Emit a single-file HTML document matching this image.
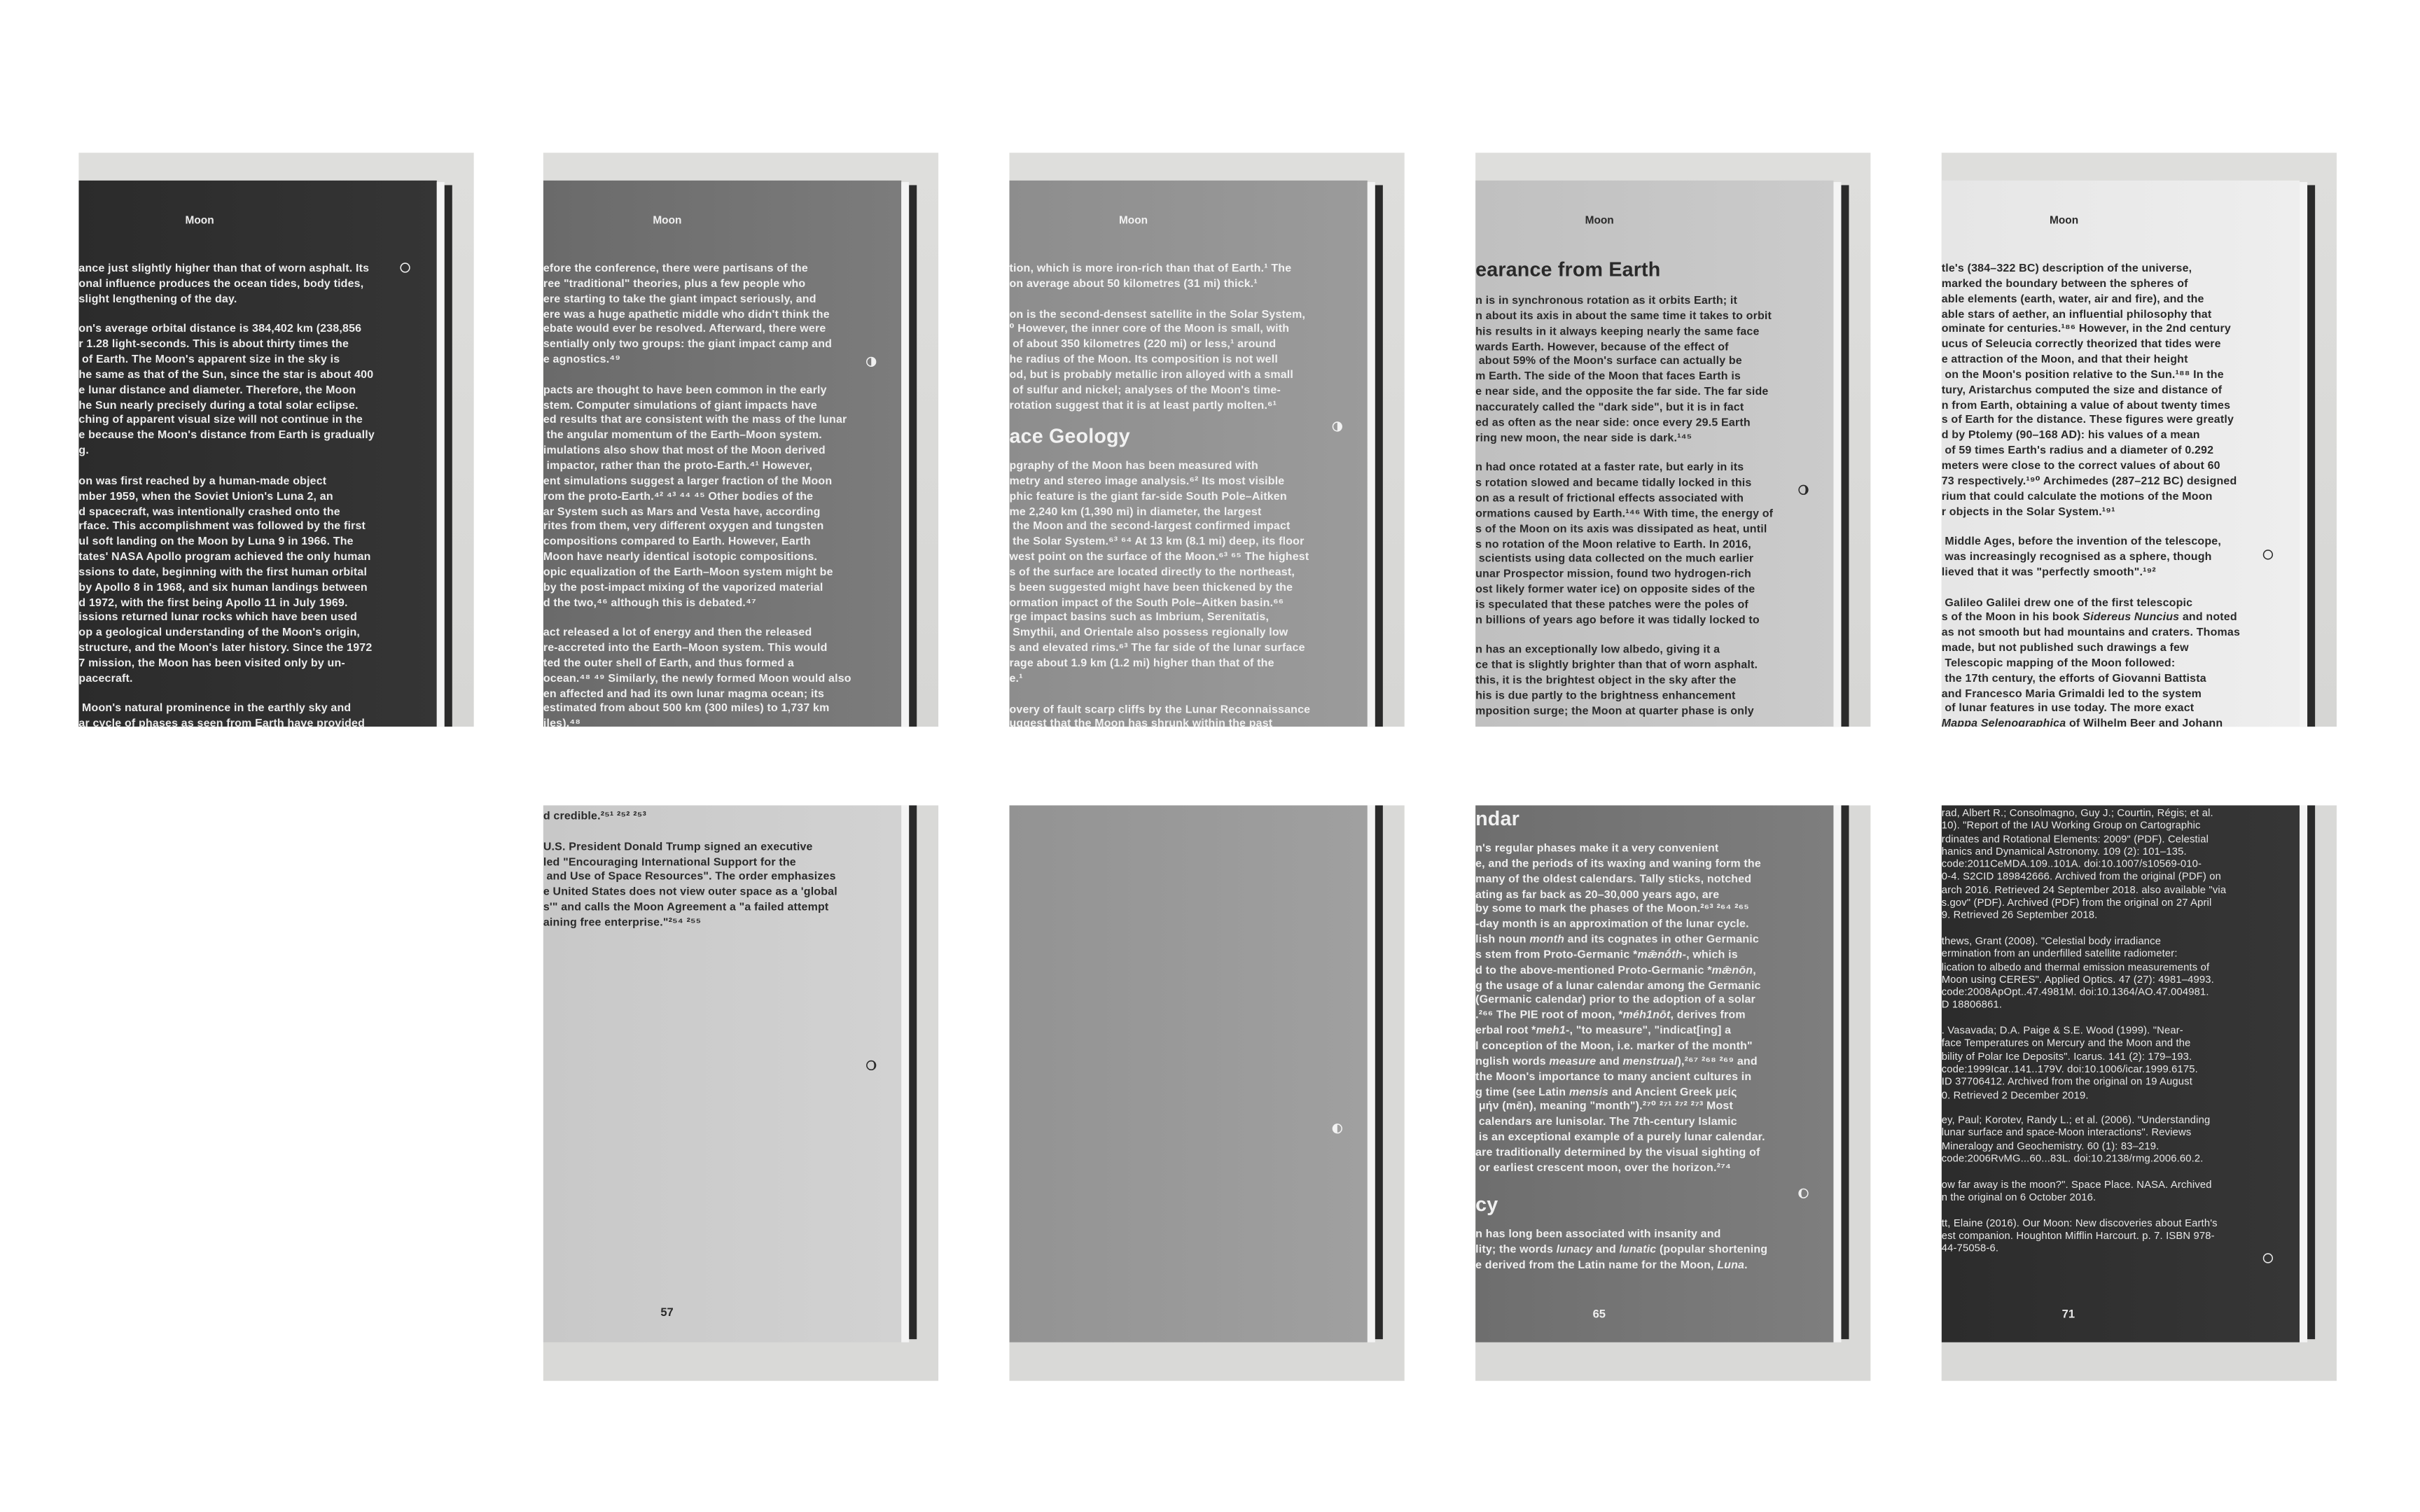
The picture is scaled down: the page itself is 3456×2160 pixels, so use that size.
<!DOCTYPE html>
<html><head><meta charset="utf-8"><style>
html,body{margin:0;padding:0;background:#fff;width:3456px;height:2160px;overflow:hidden}
#s{position:absolute;left:0;top:0;width:1568px;height:980px;transform:scale(2.20408);transform-origin:0 0}
.p{position:absolute;width:256px;overflow:hidden;background:#d9d9d7}
.t{top:99px;height:372px;background:linear-gradient(#dededc,#d6d6d4)}.b{top:522px;height:373px}
.pg{position:absolute;left:0;width:232px;overflow:hidden}
.t .pg{top:18px;bottom:0}
.t .pg > *{margin-top:3px}
.b .pg > *{margin-top:1px}
.b .pg{top:0;height:348px}
.edge{position:absolute;width:5px;background:#f4f4f4}
.bind{position:absolute;width:5px;background:#2a2a2a}
.t .edge{left:232px;top:19px;bottom:0}.t .bind{left:237px;top:21px;bottom:0}
.b .edge{left:232px;top:0;height:348px}.b .bind{left:237px;top:0;height:346px}
.tx{position:absolute;left:0;white-space:pre;font-family:"Liberation Sans","DejaVu Sans",sans-serif;font-size:7.25px;line-height:9.85px;font-weight:bold;letter-spacing:0.08px}
.h{position:absolute;font-family:"Liberation Sans",sans-serif;font-size:7px;font-weight:bold}
.hd{font-size:13px;line-height:16px;font-weight:bold}
.c{position:absolute;width:7px;height:7px}
.n{position:absolute;font-family:"Liberation Sans",sans-serif;font-size:7.5px;font-weight:bold}
</style></head><body><div id="s">

<!-- top 1 -->
<div class="p t" style="left:51px">
<div class="pg" style="background:linear-gradient(90deg,#2b2b2b,#353535);color:#ececec">
<div class="h" style="left:69px;top:20px">Moon</div>
<div class="tx" style="top:49px">ance just slightly higher than that of worn asphalt. Its
onal influence produces the ocean tides, body tides,
slight lengthening of the day.

on's average orbital distance is 384,402 km (238,856
r 1.28 light-seconds. This is about thirty times the
 of Earth. The Moon's apparent size in the sky is
he same as that of the Sun, since the star is about 400
e lunar distance and diameter. Therefore, the Moon
he Sun nearly precisely during a total solar eclipse.
ching of apparent visual size will not continue in the
e because the Moon's distance from Earth is gradually
g.

on was first reached by a human-made object
mber 1959, when the Soviet Union's Luna 2, an
d spacecraft, was intentionally crashed onto the
rface. This accomplishment was followed by the first
ul soft landing on the Moon by Luna 9 in 1966. The
tates' NASA Apollo program achieved the only human
ssions to date, beginning with the first human orbital
by Apollo 8 in 1968, and six human landings between
d 1972, with the first being Apollo 11 in July 1969.
issions returned lunar rocks which have been used
op a geological understanding of the Moon's origin,
structure, and the Moon's later history. Since the 1972
7 mission, the Moon has been visited only by un-
pacecraft.

 Moon's natural prominence in the earthly sky and
ar cycle of phases as seen from Earth have provided</div>
<svg class="c" style="left:207.5px;top:49.5px" viewBox="0 0 8 8"><circle cx="4" cy="4" r="3.3" fill="none" stroke="#eee" stroke-width="0.8"/></svg>
</div><div class="edge"></div><div class="bind"></div></div>

<!-- top 2 -->
<div class="p t" style="left:352px">
<div class="pg" style="background:linear-gradient(90deg,#6a6a6a,#7c7c7c);color:#f0f0f0">
<div class="h" style="left:71px;top:20px">Moon</div>
<div class="tx" style="top:49px">efore the conference, there were partisans of the
ree "traditional" theories, plus a few people who
ere starting to take the giant impact seriously, and
ere was a huge apathetic middle who didn't think the
ebate would ever be resolved. Afterward, there were
sentially only two groups: the giant impact camp and
e agnostics.⁴⁹

pacts are thought to have been common in the early
stem. Computer simulations of giant impacts have
ed results that are consistent with the mass of the lunar
 the angular momentum of the Earth–Moon system.
imulations also show that most of the Moon derived
 impactor, rather than the proto-Earth.⁴¹ However,
ent simulations suggest a larger fraction of the Moon
rom the proto-Earth.⁴² ⁴³ ⁴⁴ ⁴⁵ Other bodies of the
ar System such as Mars and Vesta have, according
rites from them, very different oxygen and tungsten
compositions compared to Earth. However, Earth
Moon have nearly identical isotopic compositions.
opic equalization of the Earth–Moon system might be
by the post-impact mixing of the vaporized material
d the two,⁴⁶ although this is debated.⁴⁷

act released a lot of energy and then the released
re-accreted into the Earth–Moon system. This would
ted the outer shell of Earth, and thus formed a
ocean.⁴⁸ ⁴⁹ Similarly, the newly formed Moon would also
en affected and had its own lunar magma ocean; its
estimated from about 500 km (300 miles) to 1,737 km
iles).⁴⁸</div>
<svg class="c" style="left:208.5px;top:110.5px" viewBox="0 0 8 8"><circle cx="4" cy="4" r="3.3" fill="none" stroke="#f0f0f0" stroke-width="0.8"/><path d="M4 .7A3.3 3.3 0 0 1 4 7.3Z" fill="#f0f0f0"/></svg>
</div><div class="edge"></div><div class="bind"></div></div>

<!-- top 3 -->
<div class="p t" style="left:654px">
<div class="pg" style="background:linear-gradient(90deg,#8d8d8d,#9b9b9b);color:#f2f2f2">
<div class="h" style="left:71px;top:20px">Moon</div>
<div class="tx" style="top:49px">tion, which is more iron-rich than that of Earth.¹ The
on average about 50 kilometres (31 mi) thick.¹

on is the second-densest satellite in the Solar System,
⁰ However, the inner core of the Moon is small, with
 of about 350 kilometres (220 mi) or less,¹ around
he radius of the Moon. Its composition is not well
od, but is probably metallic iron alloyed with a small
 of sulfur and nickel; analyses of the Moon's time-
rotation suggest that it is at least partly molten.⁶¹</div>
<div class="tx hd" style="top:155px">ace Geology</div>
<div class="tx" style="top:177px">pgraphy of the Moon has been measured with
metry and stereo image analysis.⁶² Its most visible
phic feature is the giant far-side South Pole–Aitken
me 2,240 km (1,390 mi) in diameter, the largest
 the Moon and the second-largest confirmed impact
 the Solar System.⁶³ ⁶⁴ At 13 km (8.1 mi) deep, its floor
west point on the surface of the Moon.⁶³ ⁶⁵ The highest
s of the surface are located directly to the northeast,
s been suggested might have been thickened by the
ormation impact of the South Pole–Aitken basin.⁶⁶
rge impact basins such as Imbrium, Serenitatis,
 Smythii, and Orientale also possess regionally low
s and elevated rims.⁶³ The far side of the lunar surface
rage about 1.9 km (1.2 mi) higher than that of the
e.¹

overy of fault scarp cliffs by the Lunar Reconnaissance
uggest that the Moon has shrunk within the past</div>
<svg class="c" style="left:208.5px;top:152.5px" viewBox="0 0 8 8"><circle cx="4" cy="4" r="3.3" fill="none" stroke="#f2f2f2" stroke-width="0.8"/><path d="M4 .7A3.3 3.3 0 0 1 4 7.3Z" fill="#f2f2f2"/></svg>
</div><div class="edge"></div><div class="bind"></div></div>

<!-- top 4 -->
<div class="p t" style="left:956px">
<div class="pg" style="background:linear-gradient(90deg,#c0c0c0,#cbcbcb);color:#2a2a2a">
<div class="h" style="left:71px;top:20px">Moon</div>
<div class="tx hd" style="top:47px">earance from Earth</div>
<div class="tx" style="top:70px">n is in synchronous rotation as it orbits Earth; it
n about its axis in about the same time it takes to orbit
his results in it always keeping nearly the same face
wards Earth. However, because of the effect of
 about 59% of the Moon's surface can actually be
m Earth. The side of the Moon that faces Earth is
e near side, and the opposite the far side. The far side
naccurately called the "dark side", but it is in fact
ed as often as the near side: once every 29.5 Earth
ring new moon, the near side is dark.¹⁴⁵

n had once rotated at a faster rate, but early in its
s rotation slowed and became tidally locked in this
on as a result of frictional effects associated with
ormations caused by Earth.¹⁴⁶ With time, the energy of
s of the Moon on its axis was dissipated as heat, until
s no rotation of the Moon relative to Earth. In 2016,
 scientists using data collected on the much earlier
unar Prospector mission, found two hydrogen-rich
ost likely former water ice) on opposite sides of the
is speculated that these patches were the poles of
n billions of years ago before it was tidally locked to

n has an exceptionally low albedo, giving it a
ce that is slightly brighter than that of worn asphalt.
this, it is the brightest object in the sky after the
his is due partly to the brightness enhancement
mposition surge; the Moon at quarter phase is only</div>
<svg class="c" style="left:208.5px;top:193.5px" viewBox="0 0 8 8"><circle cx="4" cy="4" r="3.3" fill="none" stroke="#2a2a2a" stroke-width="0.8"/><path d="M4 .7A3.3 3.3 0 0 1 4 7.3A1.6 3.3 0 0 0 4 .7Z" fill="#2a2a2a"/></svg>
</div><div class="edge"></div><div class="bind"></div></div>

<!-- top 5 -->
<div class="p t" style="left:1258px">
<div class="pg" style="background:linear-gradient(90deg,#e6e6e6,#eeeeee);color:#2a2a2a">
<div class="h" style="left:70px;top:20px">Moon</div>
<div class="tx" style="top:49px">tle's (384–322 BC) description of the universe,
marked the boundary between the spheres of
able elements (earth, water, air and fire), and the
able stars of aether, an influential philosophy that
ominate for centuries.¹⁸⁶ However, in the 2nd century
ucus of Seleucia correctly theorized that tides were
e attraction of the Moon, and that their height
 on the Moon's position relative to the Sun.¹⁸⁸ In the
tury, Aristarchus computed the size and distance of
n from Earth, obtaining a value of about twenty times
s of Earth for the distance. These figures were greatly
d by Ptolemy (90–168 AD): his values of a mean
 of 59 times Earth's radius and a diameter of 0.292
meters were close to the correct values of about 60
73 respectively.¹⁹⁰ Archimedes (287–212 BC) designed
rium that could calculate the motions of the Moon
r objects in the Solar System.¹⁹¹

 Middle Ages, before the invention of the telescope,
 was increasingly recognised as a sphere, though
lieved that it was "perfectly smooth".¹⁹²

 Galileo Galilei drew one of the first telescopic
s of the Moon in his book <i>Sidereus Nuncius</i> and noted
as not smooth but had mountains and craters. Thomas
made, but not published such drawings a few
 Telescopic mapping of the Moon followed:
 the 17th century, the efforts of Giovanni Battista
and Francesco Maria Grimaldi led to the system
 of lunar features in use today. The more exact
<i>Mappa Selenographica</i> of Wilhelm Beer and Johann</div>
<svg class="c" style="left:207.5px;top:235.5px" viewBox="0 0 8 8"><circle cx="4" cy="4" r="3.3" fill="none" stroke="#2a2a2a" stroke-width="0.8"/></svg>
</div><div class="edge"></div><div class="bind"></div></div>

<!-- bottom 2 -->
<div class="p b" style="left:352px">
<div class="pg" style="background:linear-gradient(90deg,#c8c8c8,#d2d2d2);color:#2a2a2a">
<div class="tx" style="top:1px">d credible.²⁵¹ ²⁵² ²⁵³

U.S. President Donald Trump signed an executive
led "Encouraging International Support for the
 and Use of Space Resources". The order emphasizes
e United States does not view outer space as a 'global
s'" and calls the Moon Agreement a "a failed attempt
aining free enterprise."²⁵⁴ ²⁵⁵</div>
<svg class="c" style="left:208.5px;top:163.5px" viewBox="0 0 8 8"><circle cx="4" cy="4" r="3.3" fill="none" stroke="#2a2a2a" stroke-width="0.8"/><path d="M4 .7A3.3 3.3 0 0 1 4 7.3A2.2 3.3 0 0 0 4 .7Z" fill="#2a2a2a"/></svg>
<div class="n" style="left:76px;top:323px">57</div>
</div><div class="edge"></div><div class="bind"></div></div>

<!-- bottom 3 -->
<div class="p b" style="left:654px">
<div class="pg" style="background:linear-gradient(90deg,#939393,#a0a0a0)">
<svg class="c" style="left:208.5px;top:204.5px" viewBox="0 0 8 8"><circle cx="4" cy="4" r="3.3" fill="none" stroke="#f2f2f2" stroke-width="0.8"/><path d="M4 .7A3.3 3.3 0 0 0 4 7.3Z" fill="#f2f2f2"/></svg>
</div><div class="edge"></div><div class="bind"></div></div>

<!-- bottom 4 -->
<div class="p b" style="left:956px">
<div class="pg" style="background:linear-gradient(90deg,#6e6e6e,#7e7e7e);color:#f0f0f0">
<div class="tx hd" style="top:0px">ndar</div>
<div class="tx" style="top:22px">n's regular phases make it a very convenient
e, and the periods of its waxing and waning form the
many of the oldest calendars. Tally sticks, notched
ating as far back as 20–30,000 years ago, are
by some to mark the phases of the Moon.²⁶³ ²⁶⁴ ²⁶⁵
-day month is an approximation of the lunar cycle.
lish noun <i>month</i> and its cognates in other Germanic
s stem from Proto-Germanic *<i>mǣnṓth-</i>, which is
d to the above-mentioned Proto-Germanic *<i>mǣnōn</i>,
g the usage of a lunar calendar among the Germanic
(Germanic calendar) prior to the adoption of a solar
.²⁶⁶ The PIE root of moon, *<i>méh1nōt</i>, derives from
erbal root *<i>meh1-</i>, "to measure", "indicat[ing] a
l conception of the Moon, i.e. marker of the month"
nglish words <i>measure</i> and <i>menstrual</i>),²⁶⁷ ²⁶⁸ ²⁶⁹ and
the Moon's importance to many ancient cultures in
g time (see Latin <i>mensis</i> and Ancient Greek μείς
 μήν (mēn), meaning "month").²⁷⁰ ²⁷¹ ²⁷² ²⁷³ Most
 calendars are lunisolar. The 7th-century Islamic
 is an exceptional example of a purely lunar calendar.
are traditionally determined by the visual sighting of
 or earliest crescent moon, over the horizon.²⁷⁴</div>
<div class="tx hd" style="top:250px">cy</div>
<div class="tx" style="top:272px">n has long been associated with insanity and
lity; the words <i>lunacy</i> and <i>lunatic</i> (popular shortening
e derived from the Latin name for the Moon, <i>Luna</i>.</div>
<svg class="c" style="left:208.5px;top:246.5px" viewBox="0 0 8 8"><circle cx="4" cy="4" r="3.3" fill="none" stroke="#f0f0f0" stroke-width="0.8"/><path d="M4 .7A3.3 3.3 0 0 0 4 7.3A1.6 3.3 0 0 1 4 .7Z" fill="#f0f0f0"/></svg>
<div class="n" style="left:76px;top:324px">65</div>
</div><div class="edge"></div><div class="bind"></div></div>

<!-- bottom 5 -->
<div class="p b" style="left:1258px">
<div class="pg" style="background:linear-gradient(90deg,#2c2c2c,#363636);color:#e8e8e8">
<div class="tx" style="top:1px;font-weight:normal;font-size:6.7px;line-height:8.3px">rad, Albert R.; Consolmagno, Guy J.; Courtin, Régis; et al.
10). "Report of the IAU Working Group on Cartographic
rdinates and Rotational Elements: 2009" (PDF). Celestial
hanics and Dynamical Astronomy. 109 (2): 101–135.
code:2011CeMDA.109..101A. doi:10.1007/s10569-010-
0-4. S2CID 189842666. Archived from the original (PDF) on
arch 2016. Retrieved 24 September 2018. also available "via
s.gov" (PDF). Archived (PDF) from the original on 27 April
9. Retrieved 26 September 2018.

thews, Grant (2008). "Celestial body irradiance
ermination from an underfilled satellite radiometer:
lication to albedo and thermal emission measurements of
Moon using CERES". Applied Optics. 47 (27): 4981–4993.
code:2008ApOpt..47.4981M. doi:10.1364/AO.47.004981.
D 18806861.

. Vasavada; D.A. Paige &amp; S.E. Wood (1999). "Near-
face Temperatures on Mercury and the Moon and the
bility of Polar Ice Deposits". Icarus. 141 (2): 179–193.
code:1999Icar..141..179V. doi:10.1006/icar.1999.6175.
ID 37706412. Archived from the original on 19 August
0. Retrieved 2 December 2019.

ey, Paul; Korotev, Randy L.; et al. (2006). "Understanding
lunar surface and space-Moon interactions". Reviews
Mineralogy and Geochemistry. 60 (1): 83–219.
code:2006RvMG...60...83L. doi:10.2138/rmg.2006.60.2.

ow far away is the moon?". Space Place. NASA. Archived
n the original on 6 October 2016.

tt, Elaine (2016). Our Moon: New discoveries about Earth's
est companion. Houghton Mifflin Harcourt. p. 7. ISBN 978-
44-75058-6.</div>
<svg class="c" style="left:207.5px;top:288.5px" viewBox="0 0 8 8"><circle cx="4" cy="4" r="3.3" fill="none" stroke="#e8e8e8" stroke-width="0.8"/></svg>
<div class="n" style="left:78px;top:324px">71</div>
</div><div class="edge"></div><div class="bind"></div></div>

</div></body></html>
